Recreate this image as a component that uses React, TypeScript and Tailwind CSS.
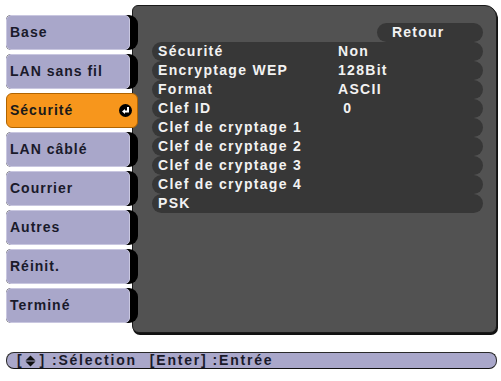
import React from 'react';

const tabs = ['Base', 'LAN sans fil', 'Sécurité', 'LAN câblé', 'Courrier', 'Autres', 'Réinit.', 'Terminé'];

const rows: [string, string][] = [
  ['Sécurité', 'Non'],
  ['Encryptage WEP', '128Bit'],
  ['Format', 'ASCII'],
  ['Clef ID', '\u00a00'],
  ['Clef de cryptage 1', ''],
  ['Clef de cryptage 2', ''],
  ['Clef de cryptage 3', ''],
  ['Clef de cryptage 4', ''],
  ['PSK', ''],
];

const EnterIcon = () => (
  <svg width="13" height="13" viewBox="0 0 13 13">
    <circle cx="6.5" cy="6.5" r="6.5" fill="#000" />
    <path d="M9 3 V7.5 H5" stroke="#fff" strokeWidth="2" fill="none" />
    <polygon points="3,7.5 6,5 6,10" fill="#fff" />
  </svg>
);

const UpDownIcon = () => (
  <svg width="11" height="12" viewBox="0 0 11 12">
    <polygon points="5.5,0.5 10.5,5.5 0.5,5.5" fill="#111" />
    <polygon points="0.5,6.5 10.5,6.5 5.5,11.5" fill="#111" />
  </svg>
);

const Tab: React.FC<{ label: string; active?: boolean }> = ({ label, active }) => {
  if (active) {
    return (
      <div className="relative z-10 flex h-[35px] w-[132px] items-center justify-between rounded-[6px] border border-[#b06400] bg-[#f7961c] pl-[3px] pr-[5px]">
        <span className="text-[14px] font-bold tracking-[1px] text-[#1a1a1a]">{label}</span>
        <EnterIcon />
      </div>
    );
  }
  return (
    <div className="relative z-10 flex h-[35px] w-[132px] rounded-l-[5px] rounded-r-[9px] bg-black">
      <div className="flex h-full w-[124px] items-center rounded-[5px] border border-[#c9c7e0] bg-[#a9a7ca] pl-[3px]">
        <span className="text-[14px] font-bold tracking-[1px] text-[#1a1a2a]">{label}</span>
      </div>
    </div>
  );
};

export default function App() {
  return (
    <div
      className="h-[381px] w-[501px] overflow-hidden bg-white"
      style={{ fontFamily: '"Liberation Sans", Arial, sans-serif' }}
    >
      <div className="flex">
        <div className="flex w-[132px] flex-col gap-[4px] pl-[6px] pt-[15px]">
          {tabs.map((t) => (
            <Tab key={t} label={t} active={t === 'Sécurité'} />
          ))}
        </div>

        <div className="mt-[5px] flex h-[328px] w-[365px] flex-col rounded-tl-[6px] rounded-tr-[12px] rounded-b-[7px] border border-[#1a1a1a] bg-[#525252] pl-[19px] pr-[13px] pt-[17px] shadow-[1px_2px_0_#111]">
          <div className="flex justify-end">
            <div className="flex h-[19px] w-[106px] items-center rounded-full bg-[#373737] pl-[15px]">
              <span className="text-[14px] font-bold tracking-[1.2px] text-[#f2f2f2]">Retour</span>
            </div>
          </div>
          {rows.map(([label, value]) => (
            <div key={label} className="flex h-[19px] items-center rounded-full bg-[#373737] pl-[6px]">
              <span className="w-[180px] shrink-0 whitespace-nowrap text-[14px] font-bold tracking-[1.3px] text-[#f2f2f2]">
                {label}
              </span>
              <span className="whitespace-pre text-[14px] font-bold tracking-[1.3px] text-[#f2f2f2]">{value}</span>
            </div>
          ))}
        </div>
      </div>

      <div className="ml-[6px] mt-[19px] flex h-[17px] w-[491px] items-center rounded-[8px] border border-[#2a2a2a] border-b-[#111] bg-[#a9a7ca] pl-[10px] text-[14px] font-bold tracking-[1.8px] text-[#1a1a2a]">
        <span>[</span>
        <span className="ml-[2px] mr-[3px] flex items-center">
          <UpDownIcon />
        </span>
        <span>]</span>
        <span className="ml-[6px]">:Sélection</span>
        <span className="ml-[13px]">[Enter]</span>
        <span className="ml-[5px]">:Entrée</span>
      </div>
    </div>
  );
}
